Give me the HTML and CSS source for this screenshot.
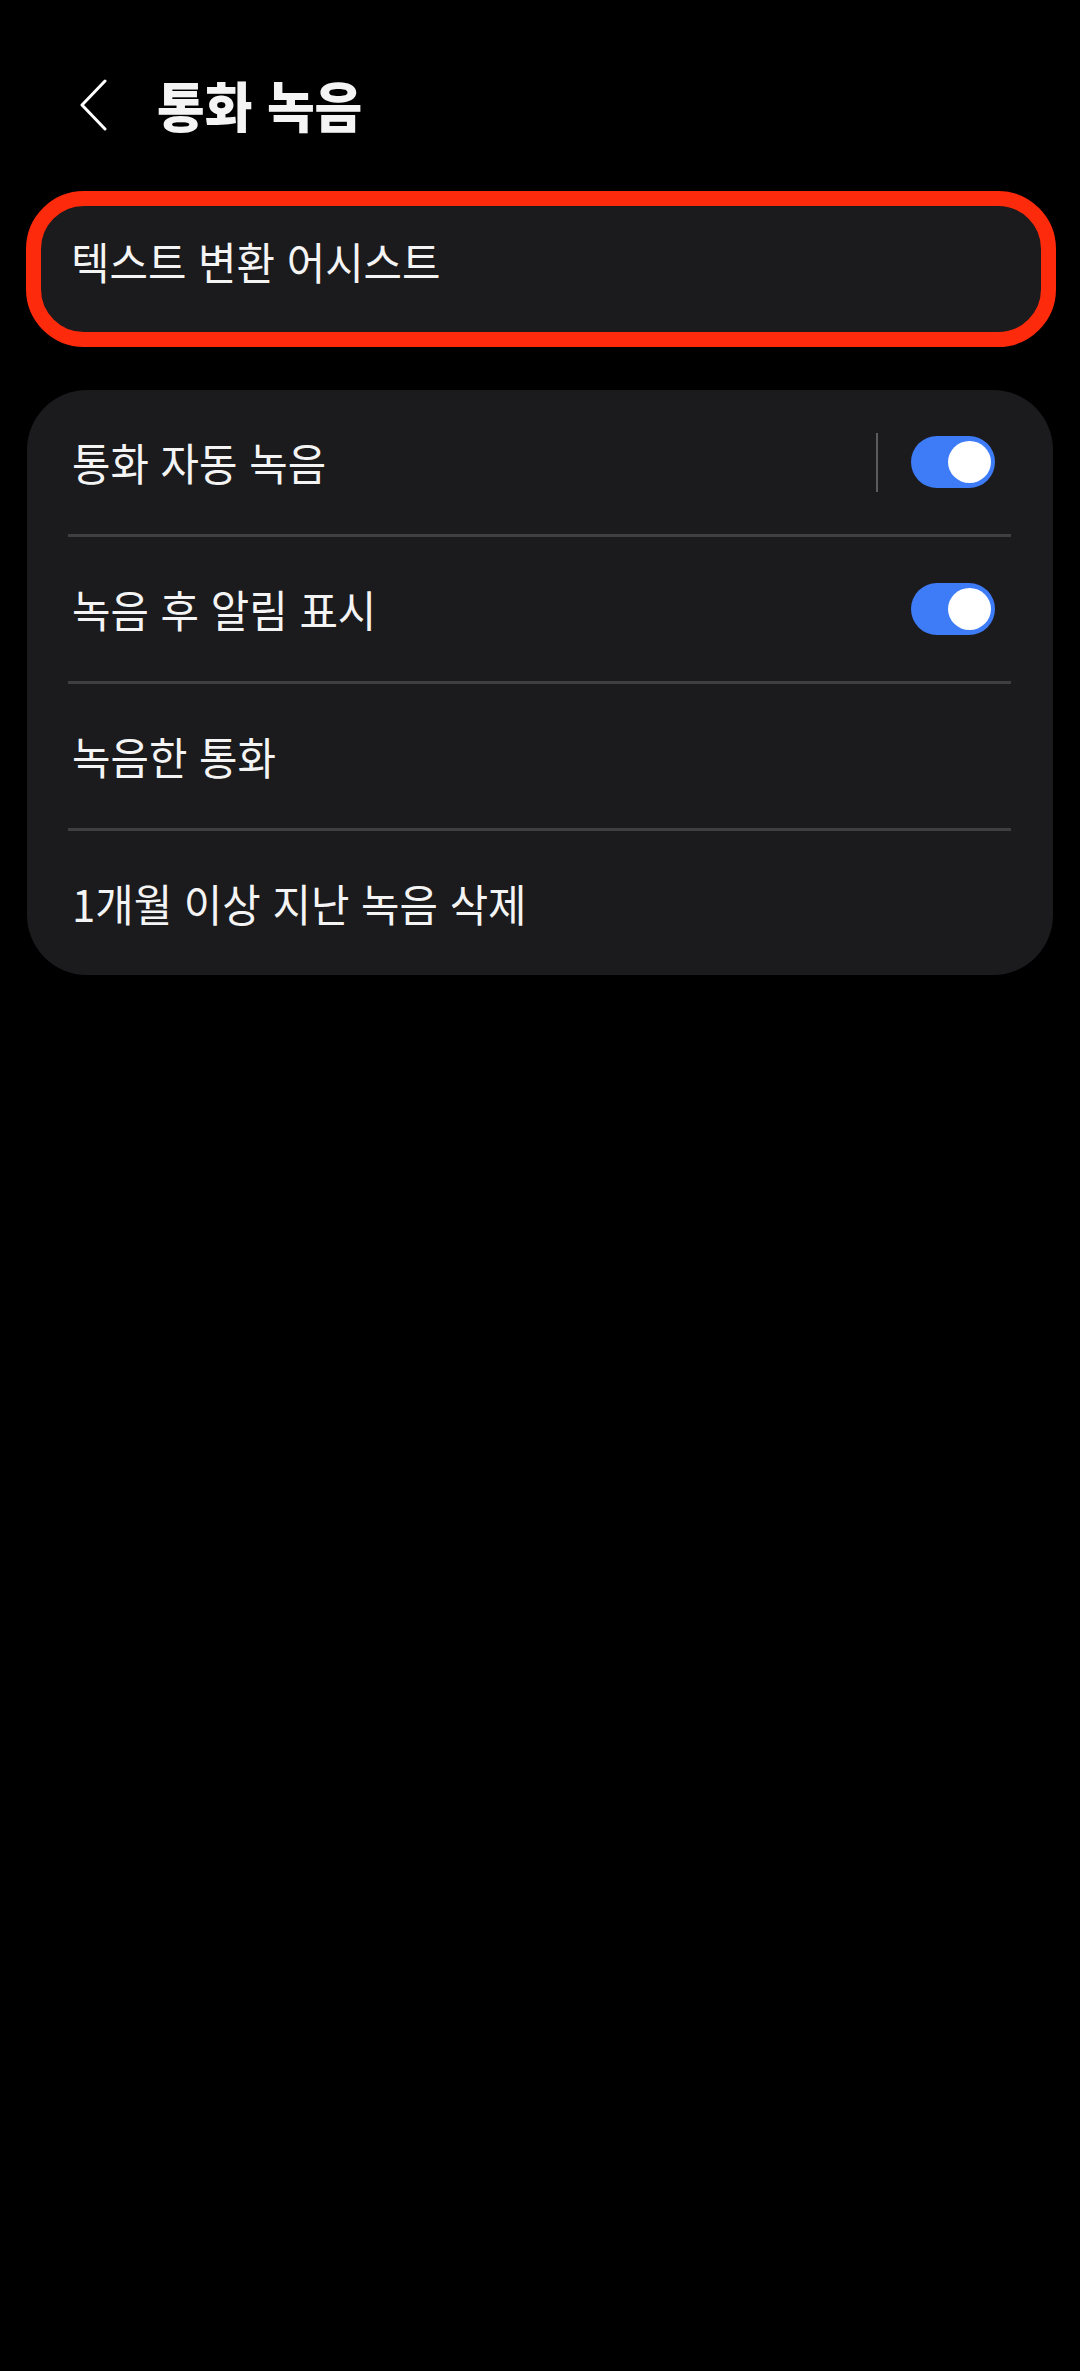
FILE: index.html
```html
<!DOCTYPE html>
<html lang="ko">
<head>
<meta charset="utf-8">
<title>통화 녹음</title>
<link rel="stylesheet" href="styles.css">
</head>
<body>
<div class="page">
  <header class="header">
    <svg class="back" viewBox="0 0 27 52" width="27" height="52" aria-hidden="true">
      <polyline points="25,2 2,26 25,50" fill="none" stroke="#ffffff" stroke-width="3" stroke-linecap="round" stroke-linejoin="round"/>
    </svg>
    <h1 class="title"><span class="title-text">통화 녹음</span></h1>
  </header>

  <div class="card card-highlight">
    <span class="label">텍스트 변환 어시스트</span>
  </div>

  <div class="card card-list">
    <div class="row">
      <span class="label">통화 자동 녹음</span>
      <span class="vsep"></span>
      <span class="toggle on"><span class="thumb"></span></span>
    </div>
    <div class="divider"></div>
    <div class="row">
      <span class="label">녹음 후 알림 표시</span>
      <span class="toggle on"><span class="thumb"></span></span>
    </div>
    <div class="divider"></div>
    <div class="row">
      <span class="label">녹음한 통화</span>
    </div>
    <div class="divider"></div>
    <div class="row">
      <span class="label">1개월 이상 지난 녹음 삭제</span>
    </div>
  </div>
</div>
</body>
</html>
```

FILE: styles.css
```css
html, body {
  margin: 0;
  padding: 0;
  background: #000000;
}

body {
  width: 1080px;
  min-height: 2371px;
  font-family: "Noto Sans CJK KR", "Noto Sans", sans-serif;
  color: #f4f4f4;
}

.page {
  display: flex;
  flex-direction: column;
}

.header {
  display: flex;
  align-items: center;
  height: 94px;
  padding: 58px 0 0 80px;
}

.back {
  display: block;
  flex: none;
  margin-right: 50px;
}

.title {
  margin: 0;
  font-size: 54px;
  font-weight: 900;
  line-height: 1.2;
  white-space: nowrap;
}

.title-text {
  display: inline-block;
  transform: scaleX(0.96);
  transform-origin: left center;
}

.label {
  display: inline-block;
  font-size: 44px;
  font-weight: 400;
  line-height: 1.2;
  white-space: nowrap;
  transform: scaleX(0.95);
  transform-origin: left center;
}

.card {
  background: #1b1b1d;
}

.card-highlight {
  display: flex;
  align-items: center;
  box-sizing: border-box;
  margin: 39px 0 0 26px;
  width: 1030px;
  height: 156px;
  border: 15px solid #fe2a0c;
  border-radius: 58px;
  padding: 0 0 16px 30px;
}

.card-list {
  margin: 43px 0 0 27px;
  width: 1026px;
  border-radius: 60px;
  display: flex;
  flex-direction: column;
}

.row {
  display: flex;
  align-items: center;
  height: 144px;
  padding: 0 58px 0 45px;
}

.row .label {
  flex: 1;
}

.divider {
  height: 3px;
  margin: 0 42px 0 41px;
  background: #3f3f42;
}

.vsep {
  width: 2px;
  height: 59px;
  background: #5c5c5e;
  margin-right: 33px;
  flex: none;
}

.toggle {
  position: relative;
  flex: none;
  width: 84px;
  height: 52px;
  border-radius: 26px;
  background: #3e7cf7;
}

.toggle .thumb {
  position: absolute;
  top: 5px;
  right: 4px;
  width: 43px;
  height: 42px;
  border-radius: 50%;
  background: #ffffff;
}
```
